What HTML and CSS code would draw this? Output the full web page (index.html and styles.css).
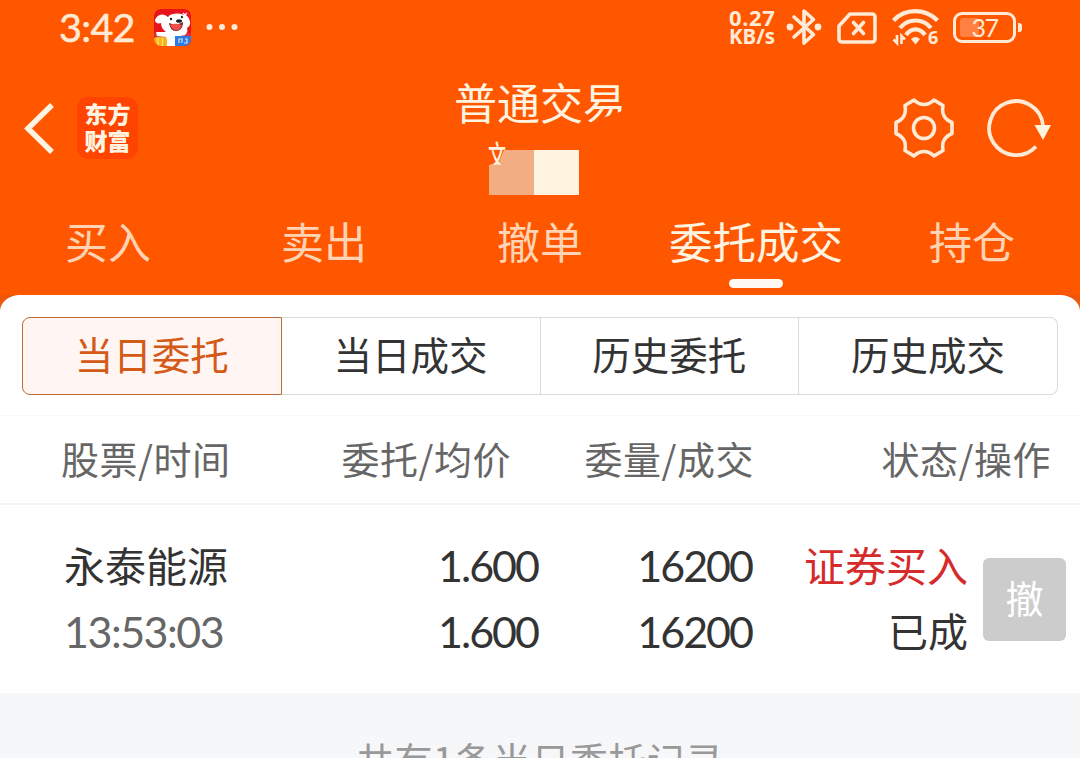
FILE: index.html
```
<!DOCTYPE html>
<html lang="zh-CN">

<head>
  <meta charset="UTF-8">
  <meta name="viewport" content="width=device-width, initial-scale=1.0">
  <title>普通交易</title>
  <link rel="stylesheet" href="styles.css">
</head>

<body>
  <header class="header">

    <div class="status-bar">
      <span class="time">3:42</span>
      <svg class="app-icon" width="37" height="37" viewBox="0 0 37 37">
        <defs>
          <clipPath id="app-clip"><rect width="37" height="37" rx="7" /></clipPath>
        </defs>
        <g clip-path="url(#app-clip)">
          <rect width="37" height="37" fill="#e8131d" />
          <path d="M0 24h37v13H0z" fill="#d9304a" />
          <path d="M14 8C8 3 3 6 1 11c0 3 3 4 6 3 0 4 2 7 5 9l-10 0 1 4 9 1v9h10v-9l9-2c2-2 3-4 2-7 4-2 4-7 1-11C29 4 18 3 14 8z" fill="#fff" />
          <ellipse cx="25" cy="12" rx="3" ry="1.8" fill="#222" />
          <circle cx="17" cy="10" r="1.2" fill="#222" />
          <circle cx="28" cy="8" r="1.2" fill="#222" />
          <path d="M15 14c5 2 9 2 14-1 0 6-3 9-7 9-4 0-6-3-7-8z" fill="#7c1f20" />
          <path d="M16 16c4-2 8-1 12 0-2 7-9 7-12 0z" fill="#f0504b" />
          <path d="M29 4l4 4M33 4l-4 4" stroke="#fff" stroke-width="1.2" />
          <rect x="0" y="28" width="13" height="10" rx="3" fill="#f9b619" />
          <path d="M4 29v8M8.500 29v8" stroke="#ffe07a" stroke-width="1.2" />
          <rect x="21" y="27" width="16" height="10" fill="#2f7be0" />
          <path d="M25 34v-4h3v4M31 30h2v4h-3" stroke="#cfe4ff" stroke-width="1.2" fill="none" />
        </g>
      </svg>
      <svg class="more" width="32" height="8" viewBox="0 0 32 8" fill="#ffead6">
        <circle cx="3.500" cy="4" r="3" />
        <circle cx="16" cy="4" r="3" />
        <circle cx="28.500" cy="4" r="3" />
      </svg>

      <div class="speed">
        <span class="speed-value">0.27</span>
        <span>KB/s</span>
      </div>
      <svg class="bluetooth" width="36" height="40" viewBox="0 0 36 40">
        <path d="M8 10L27.500 27.500 18 36V4l9.500 8.500L8 30" fill="none" stroke="#ffead6" stroke-width="3.600" stroke-linejoin="round" stroke-linecap="round" />
        <circle cx="4" cy="20" r="3.400" fill="#ffead6" />
        <circle cx="32" cy="20" r="3.400" fill="#ffead6" />
      </svg>
      <svg class="sim" width="40" height="32" viewBox="0 0 40 32" fill="none" stroke="#ffead6">
        <path d="M13 2h22a3 3 0 0 1 3 3v22a3 3 0 0 1-3 3H5a3 3 0 0 1-3-3V14z" stroke-width="3.600" stroke-linejoin="round" />
        <path d="M16.500 10.500l10 11M26.500 10.500l-10 11" stroke-width="3.600" stroke-linecap="round" />
      </svg>
      <svg class="wifi" width="48" height="38" viewBox="0 0 48 38" fill="none" stroke="#ffead6" stroke-width="4.200">
        <path d="M1.500 12.500C13 0 33 0 45.500 12.500" />
        <path d="M8 20C16 10 31 10 39 20" />
        <path d="M14 27C19 19.500 28 19.500 33 27" />
        <path d="M19 31q4.500-4 9 0l-4.500 5.500z" fill="#ffead6" stroke="none" />
        <path d="M5 27v8L1.500 31.500M9.500 36v-8l3.500 3.500" stroke-width="2.600" />
        <text class="wifi-gen" x="36" y="36">6</text>
      </svg>
      <div class="battery">
        <div class="battery-level"></div>
        <span>37</span>
      </div>
      <div class="battery-cap"></div>
    </div>

    <div class="title-bar">
      <svg class="back" width="32" height="52" viewBox="0 0 32 52">
        <path d="M30 3L6 26.500 30 50" fill="none" stroke="#fff4e2" stroke-width="5.500" />
      </svg>
      <div class="logo">
        <span>东方</span>
        <span>财富</span>
      </div>
      <div class="title">
        <h1>普通交<span class="title-cut">易</span></h1>
        <div class="account">
          <div class="mask mask-dark"></div>
          <div class="mask mask-light"></div>
          <span class="account-name">文</span>
        </div>
      </div>
      <svg class="gear" width="62" height="62" viewBox="0 0 62 62" fill="none" stroke="#ffead6" stroke-width="3.600">
        <path d="M21 3L12 8.500C13.500 17 11 22 3 25.500v11C11 40 13.500 45 12 53.500l9 5.500c6-6 14-6 20 0l9-5.500C48.500 45 51 40 59 36.500v-11C51 22 48.500 17 50 8.500L41 3c-6 6-14 6-20 0z" stroke-linejoin="round" />
        <circle cx="31" cy="31" r="10.500" />
      </svg>
      <svg class="refresh" width="66" height="60" viewBox="0 0 66 60">
        <path d="M50 48.500A27 27 0 1 1 57 27" fill="none" stroke="#ffead6" stroke-width="3.800" />
        <path d="M48.500 27H65l-8 15z" fill="#fff4e2" />
      </svg>
    </div>

    <nav class="tabs">
      <a>买入</a>
      <a>卖出</a>
      <a>撤单</a>
      <a class="active">委托成交</a>
      <a>持仓</a>
    </nav>

  </header>

  <main class="panel">
    <div class="segments">
      <button class="selected">当日委托</button>
      <button>当日成交</button>
      <button>历史委托</button>
      <button>历史成交</button>
    </div>

    <div class="list-head">
      <span>股票/时间</span>
      <span>委托/均价</span>
      <span>委量/成交</span>
      <span>状态/操作</span>
    </div>

    <div class="order">
      <div class="cell">
        <span class="name">永泰能源</span>
        <span class="num order-time">13:53:03</span>
      </div>
      <div class="cell">
        <span class="num">1.600</span>
        <span class="num">1.600</span>
      </div>
      <div class="cell">
        <span class="num">16200</span>
        <span class="num">16200</span>
      </div>
      <div class="cell">
        <span class="buy">证券买入</span>
        <span class="state">已成</span>
      </div>
      <button class="cancel">撤</button>
    </div>
  </main>

  <footer class="footer">共有1条当日委托记录</footer>
</body>

</html>
```
FILE: styles.css
```
* {
  padding: 0;
  border: 0;
  margin: 0;
  box-sizing: border-box;
}

body {
  font-family: "Noto Sans CJK SC", sans-serif;
  width: 1080px;
  height: 758px;
  overflow: hidden;
  background-color: #f6f7f9;
  color: #333;
}

svg {
  display: block;
  flex: none;
}

button {
  font-family: inherit;
  color: inherit;
  background: none;
}

.header {
  height: 320px;
  background: linear-gradient(#ff5700 295px, #ee560c 295px);
  color: #fff4e2;
}

/* status bar */

.status-bar {
  display: flex;
  align-items: center;
  height: 54px;
  padding-left: 59px;
  color: #ffead6;
}

.time {
  width: 95px;
  font: 400 39.5px/52px Lato, sans-serif;
  letter-spacing: -0.7px;
  -webkit-text-stroke: 0.5px #ffead6;
}

.more {
  margin-left: 15px;
}

.speed {
  display: flex;
  flex-direction: column;
  width: 50px;
  margin-left: 491px;
  font: 700 20.5px/19px "Noto Sans", sans-serif;
}

.speed-value {
  font-size: 22px;
  letter-spacing: 0.6px;
}

.bluetooth {
  margin-left: 7px;
}

.sim {
  margin-left: 15px;
  margin-top: 2px;
}

.wifi {
  margin-left: 15px;
  overflow: visible;
}

.wifi-gen {
  font: 700 18px "Noto Sans", sans-serif;
  fill: #ffead6;
  stroke: none;
}

.battery {
  position: relative;
  width: 63px;
  height: 31px;
  margin-left: 13px;
  border: 3px solid #ffead6;
  border-radius: 9px;
  font: 400 25px/25px Lato, sans-serif;
  letter-spacing: -1.5px;
  text-align: center;
}

.battery span {
  position: relative;
}

.battery-level {
  position: absolute;
  left: 4px;
  top: 3px;
  width: 19px;
  height: 19px;
  border-radius: 3px;
  background-color: #ff8040;
}

.battery-cap {
  width: 4px;
  height: 9px;
  margin-left: 2px;
  border-radius: 0 3px 3px 0;
  background-color: #ffead6;
}

/* title bar */

.title-bar {
  display: flex;
  align-items: center;
  height: 148px;
  padding: 0 28px 0 22px;
}

.logo {
  display: flex;
  flex-direction: column;
  justify-content: center;
  width: 61px;
  height: 62px;
  margin-left: 23px;
  padding-bottom: 3px;
  border-radius: 11px;
  background-color: #ff4300;
  font-size: 23px;
  font-weight: 900;
  line-height: 27px;
  text-align: center;
}

.title {
  width: 440px;
  height: 148px;
  margin-left: 182px;
  padding-top: 17px;
}

h1 {
  font-size: 43px;
  font-weight: 400;
  line-height: 60px;
  text-align: center;
}

.title-cut {
  display: inline-block;
  clip-path: polygon(0 0, 100% 0, 100% 64%, 62% 74%, 0 90%);
}

.account {
  position: relative;
  display: flex;
  margin: 19px 0 0 169px;
}

.mask {
  width: 45px;
  height: 45px;
}

.mask-dark {
  background-color: #f3ad82;
  clip-path: polygon(15px 0, 100% 0, 100% 100%, 0 100%, 0 15px, 10px 12px);
}

.mask-light {
  background-color: #fff4e0;
}

/* only the part that sticks out of the mask */
.account-name {
  position: absolute;
  left: -1px;
  top: -11px;
  font-size: 30px;
  font-weight: 500;
  line-height: 30px;
  transform: scaleX(0.6);
  transform-origin: left;
  clip-path: inset(0 0 14% 0);
}

.gear {
  margin-left: auto;
}

.refresh {
  margin-left: 31px;
}

/* tabs */

.tabs {
  display: grid;
  grid-template-columns: repeat(5, 1fr);
  height: 93px;
}

.tabs a {
  position: relative;
  font-size: 43px;
  line-height: 77px;
  text-align: center;
  color: #ffd3b3;
}

.tabs .active {
  color: #fff4e2;
  font-size: 43.5px;
}

.tabs .active::after {
  content: "";
  position: absolute;
  left: 81px;
  top: 77px;
  width: 54px;
  height: 9px;
  border-radius: 5px;
  background-color: #fffaf2;
}

/* orders */

.panel {
  position: relative;
  height: 398px;
  margin-top: -25px;
  padding-top: 22px;
  border-radius: 20px 20px 0 0 / 16px 16px 0 0;
  background-color: #fff;
}

.segments {
  display: flex;
  height: 78px;
  margin: 0 22px;
}

.segments button {
  flex: 1;
  padding-bottom: 5px;
  border: 1px solid #d9dcdc;
  border-left: 0;
  font-size: 38.5px;
  line-height: 71px;
}

.segments button:last-child {
  border-radius: 0 8px 8px 0;
}

.segments .selected {
  border: 1px solid #c0683a;
  border-radius: 8px 0 0 8px;
  background-color: #fff6f3;
  color: #d45a18;
}

.list-head {
  display: grid;
  grid-template-columns: 202px 248px 243px 297px;
  height: 90px;
  margin-top: 20px;
  padding-left: 61px;
  border-top: 1px solid #f7f7f7;
  border-bottom: 2px solid #f4f4f4;
  font-size: 38px;
  line-height: 84px;
  color: #666;
  text-align: right;
}

.list-head span {
  letter-spacing: 0.5px;
}

.list-head span:first-child {
  text-align: left;
}

.order {
  display: grid;
  grid-template-columns: 200px 274px 214px 216px 83px;
  align-items: center;
  height: 188px;
  padding-left: 64px;
}

.cell {
  display: flex;
  flex-direction: column;
  text-align: right;
}

.cell:first-child {
  text-align: left;
}

.cell span {
  height: 66px;
  line-height: 66px;
}

.cell .name,
.cell .buy,
.cell .state {
  font-size: 41px;
  line-height: 62px;
}

.cell .buy {
  color: #d52b2b;
}

.cell .state {
  font-size: 40px;
}

.num {
  font-family: Lato, sans-serif;
  font-size: 43px;
  letter-spacing: -2px;
}

.order-time {
  color: #666;
  letter-spacing: -1.5px;
}

.cancel {
  width: 83px;
  height: 83px;
  margin-left: 15px;
  padding-bottom: 6px;
  border-radius: 6px;
  background-color: #ccc;
  color: #fff;
  font-size: 38px;
  line-height: 77px;
}

.footer {
  padding-top: 38px;
  font-size: 38px;
  letter-spacing: 0.5px;
  line-height: 56px;
  text-align: center;
  color: #999;
}
```
